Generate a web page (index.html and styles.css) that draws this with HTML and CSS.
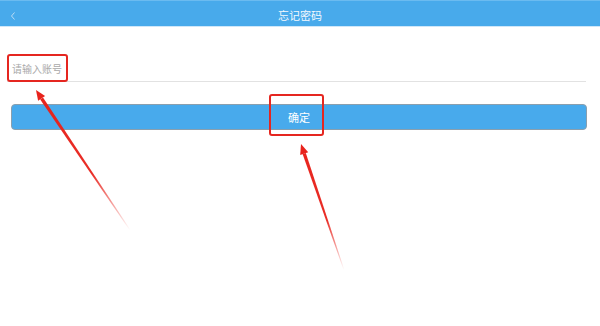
FILE: index.html
```html
<!DOCTYPE html>
<html lang="zh-CN">
<head>
<meta charset="utf-8">
<title>忘记密码</title>
<link rel="stylesheet" href="styles.css">
</head>
<body>
<div class="page">
  <header class="topbar">
    <span class="back">
      <svg width="8" height="10" viewBox="0 0 8 10"><path d="M5.5 1.5 L2.5 5 L5.5 8.5" fill="none" stroke="#bcdcf5" stroke-width="1"/></svg>
    </span>
    <h1 class="title">忘记密码</h1>
    <span class="spacer"></span>
  </header>
  <main class="form">
    <div class="field">
      <span class="placeholder">请输入账号</span>
      <span class="mark mark-field"></span>
    </div>
    <div class="submit">
      <span class="submit-text">确定</span>
      <span class="mark mark-btn"></span>
    </div>
  </main>
  <svg class="arrows" width="600" height="326" viewBox="0 0 600 326">
    <defs>
      <linearGradient id="g1" gradientUnits="userSpaceOnUse" x1="36" y1="90" x2="130" y2="230">
        <stop offset="0" stop-color="#e8231c" stop-opacity="1"/>
        <stop offset="0.6" stop-color="#e8231c" stop-opacity="0.95"/>
        <stop offset="1" stop-color="#e8231c" stop-opacity="0"/>
      </linearGradient>
      <linearGradient id="g2" gradientUnits="userSpaceOnUse" x1="301" y1="144" x2="344" y2="270">
        <stop offset="0" stop-color="#e8231c" stop-opacity="1"/>
        <stop offset="0.6" stop-color="#e8231c" stop-opacity="0.95"/>
        <stop offset="1" stop-color="#e8231c" stop-opacity="0"/>
      </linearGradient>
    </defs>
    <polygon points="36,90 38.1,100.8 45.1,96.1" fill="#e8231c"/>
    <polygon points="40.2,99.4 43,97.5 130.4,229.7 129.6,230.3" fill="url(#g1)"/>
    <polygon points="301,144 300.2,155 308.2,152.2" fill="#e8231c"/>
    <polygon points="302.6,154.1 305.8,153 344.4,269.9 343.6,270.1" fill="url(#g2)"/>
  </svg>
</div>
</body>
</html>
```
FILE: styles.css
```css
* { box-sizing: border-box; }
html, body { margin: 0; padding: 0; background: #ffffff; }
body {
  font-family: "Noto Sans CJK SC", "Noto Sans", sans-serif;
  width: 600px;
  height: 326px;
  overflow: hidden;
}
.page { position: relative; width: 600px; height: 326px; }
.topbar {
  height: 27px;
  background: #48aaeb;
  border-top: 1px solid #6bbbf0;
  border-bottom: 1px solid #cfe7f9;
  display: flex;
  align-items: center;
  padding: 0 0 0 9px;
}
.back { width: 8px; height: 10px; display: flex; margin-top: 4px; }
.spacer { width: 17px; }
.title {
  flex: 1;
  margin: 0;
  text-align: center;
  font-size: 11px;
  font-weight: normal;
  color: #f4f9fe;
  line-height: 25px;
  margin-top: 4px;
}
.form {
  padding: 27px 13px 0 7px;
  display: flex;
  flex-direction: column;
}
.field {
  position: relative;
  height: 28px;
  margin-right: 1px;
  border-bottom: 1px solid #e2e2e2;
  display: flex;
  align-items: center;
  padding-left: 5px;
}
.placeholder { font-size: 10px; color: #a9a9a9; margin-top: 1px; }
.mark {
  position: absolute;
  border: 2px solid #e52620;
  border-radius: 3px;
}
.mark-field { left: 0; top: 0; width: 61px; height: 28px; }
.submit {
  position: relative;
  margin: 22px 0 0 4px;
  height: 26px;
  background: #48aaec;
  border: 1px solid #8a9fae;
  border-radius: 4px;
  display: flex;
  align-items: center;
  justify-content: center;
}
.submit-text { font-size: 11px; color: #ffffff; margin-right: 0; }
.mark-btn { left: 257px; top: -11px; width: 55px; height: 42px; }
.arrows { position: absolute; left: 0; top: 0; pointer-events: none; }
```
